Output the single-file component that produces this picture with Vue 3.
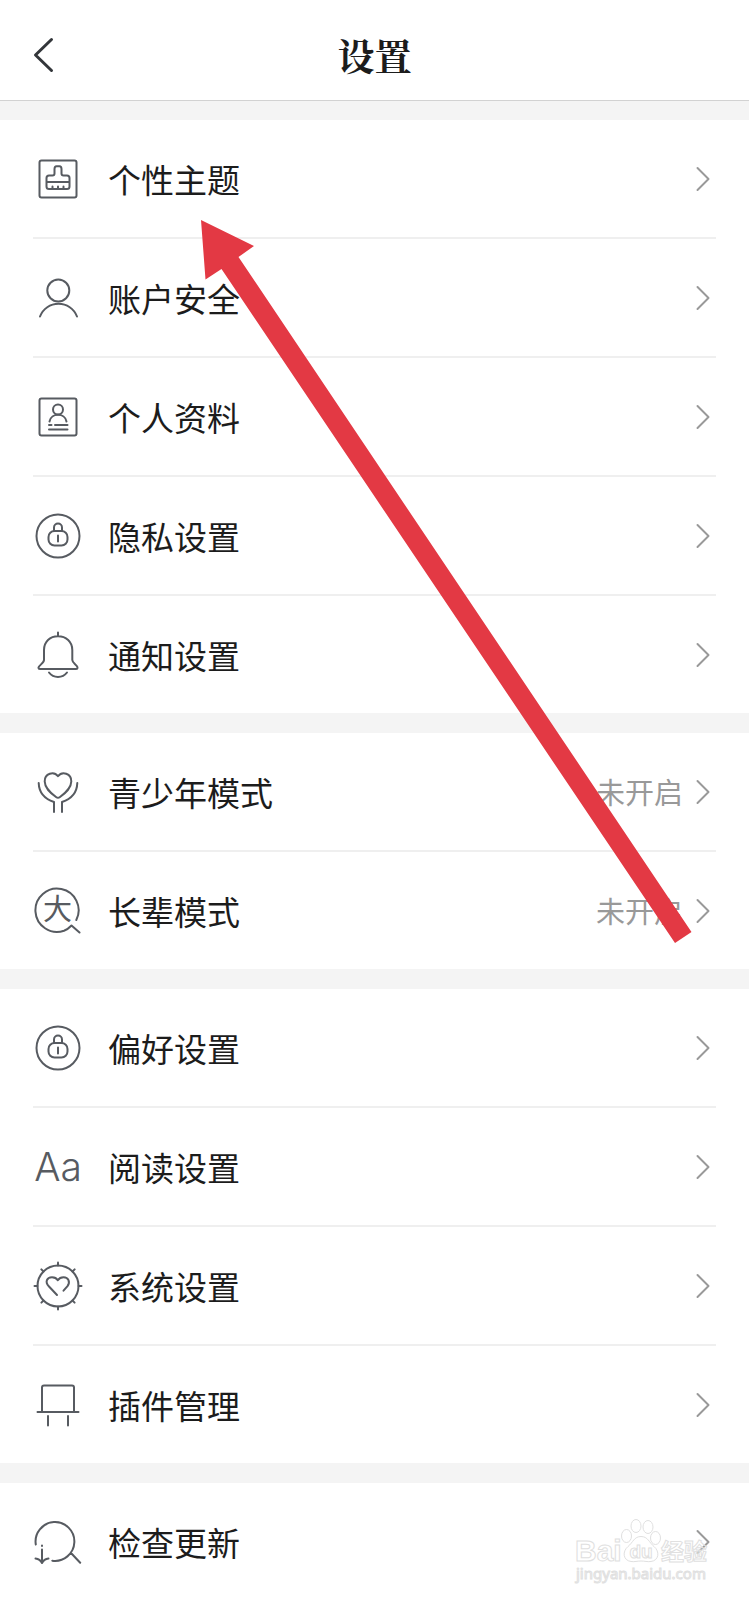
<script setup>
const groups = [
  [
    { icon: 'theme', label: '个性主题' },
    { icon: 'account', label: '账户安全' },
    { icon: 'profile', label: '个人资料' },
    { icon: 'lock', label: '隐私设置' },
    { icon: 'bell', label: '通知设置' },
  ],
  [
    { icon: 'youth', label: '青少年模式', value: '未开启' },
    { icon: 'elder', label: '长辈模式', value: '未开启' },
  ],
  [
    { icon: 'lock', label: '偏好设置' },
    { icon: 'reading', label: '阅读设置' },
    { icon: 'system', label: '系统设置' },
    { icon: 'plugin', label: '插件管理' },
  ],
  [{ icon: 'update', label: '检查更新' }],
]
const angles = [0, 45, 90, 135, 180, 225, 270, 315]
</script>

<template>
  <div class="page">
    <header class="header">
      <button class="back" type="button" aria-label="返回">
        <svg width="24" height="36" viewBox="0 0 24 36"><path d="M20.500 2.500L4.500 18l16 15.500" /></svg>
      </button>
      <h1 class="title">设置</h1>
    </header>

    <main class="groups">
      <ul v-for="(group, g) in groups" :key="g" class="group">
        <li v-for="item in group" :key="item.label" class="item">
          <button class="row" type="button">
            <svg class="icon" viewBox="-1 -1 50 50" aria-hidden="true">
              <g v-if="item.icon === 'theme'">
                <rect x="5.500" y="5.500" width="37" height="37" rx="2" />
                <path d="M15 34q-2.500 0-2.500-2.500V23q0-2.500 2.500-2.500h3.500q2 0 2-2V14q0-2.800 2-2.800h3q2 0 2 2.800v4.500q0 2 2 2H33q2.500 0 2.500 2.500v8.500q0 2.500-2.500 2.500zM12.500 27h23M18.500 31.500V34M24 31.500V34M29.500 31.500V34" />
              </g>
              <g v-else-if="item.icon === 'account'">
                <circle cx="24.300" cy="16.500" r="11" />
                <path d="M6 42.500a19.800 19.800 0 0 1 37 0" />
              </g>
              <g v-else-if="item.icon === 'profile'">
                <rect x="5.500" y="5.500" width="37" height="37" rx="2" />
                <circle cx="24" cy="16.500" r="5" />
                <path d="M15.500 28.500C17 19.500 31 19.500 32.500 28.500M15 32h2.500M21 32h12.500M15 36.500h18.500" />
              </g>
              <g v-else-if="item.icon === 'lock'">
                <circle cx="24" cy="24" r="21.500" />
                <rect x="14.500" y="19" width="19" height="14.500" rx="6" />
                <path d="M20 19v-3.500a4 4 0 0 1 8 0V19M24 23.500v6" />
              </g>
              <g v-else-if="item.icon === 'bell'">
                <path d="M24 1.500V5M10 29V19C10 10.500 16 5.200 24 5.200S38.300 10.500 38.300 19v10c0 3 5 5 5.200 7.500q0 1.500-1.500 1.500H6q-1.500 0-1.500-1.500C4.800 34.500 10 32 10 29zM15 41.500c4.500 6 13.500 6 18 0" />
              </g>
              <g v-else-if="item.icon === 'youth'">
                <path d="M24 8.200C20 3 10.500 5 10.700 13.500 10.800 20 16 24.500 22 29q2 1.500 4 0c6-4.500 11.200-9 11.300-15.500C37.500 5 28 3 24 8.200zM4.700 15C5 25 11 31 20 34v10M43.300 15C43 25 37 31 28 34v10" />
              </g>
              <g v-else-if="item.icon === 'elder'">
                <path d="M42.300 33A21.600 21.600 0 1 0 30 43.700Q34 42.200 37.500 38.500L45.500 45.500" />
                <text class="glyph-cjk" x="23.500" y="33" text-anchor="middle">大</text>
              </g>
              <g v-else-if="item.icon === 'reading'">
                <text class="glyph-latin" x="24" y="38" text-anchor="middle">Aa</text>
              </g>
              <g v-else-if="item.icon === 'system'">
                <circle cx="24" cy="24" r="20.500" />
                <path v-for="a in angles" :key="a" d="M24 .5v3" :transform="`rotate(${a} 24 24)`" />
                <path d="M23 33l-8-8.500C10.500 20 13 15.200 18 15.200q4 0 5.800 3 2-3 5.700-3c5 0 7 5 4 9l-4 4.500" />
              </g>
              <g v-else-if="item.icon === 'plugin'">
                <path d="M8 31V6.500q0-2 2-2h28q2 0 2 2V31M3.500 31h41M14 35v9.500M34 35v9.500" />
              </g>
              <g v-else-if="item.icon === 'update'">
                <path d="M1.800 26.500A19.400 19.400 0 1 1 18.300 42.700M37 35l9.200 9.800M8 27.500v.5M8 31.500v13M1.500 40.500Q6 41 8 45q2-4 6.500-4.500" />
              </g>
            </svg>
            <span class="label">{{ item.label }}</span>
            <span v-if="item.value" class="value">{{ item.value }}</span>
            <svg class="chevron" viewBox="0 0 26 26" aria-hidden="true"><path d="M7.500 2l11 11-11 11" /></svg>
          </button>
        </li>
      </ul>
    </main>

    <svg class="pointer" width="491" height="723" viewBox="0 0 491 723" aria-hidden="true">
      <path d="M0 0L53 26 37.500 37 490.500 712 474 723 20.500 49 4.500 59.500z" />
    </svg>

    <svg class="watermark" width="140" height="70" viewBox="0 0 140 70" role="img" aria-label="Baidu经验">
      <ellipse cx="53.500" cy="21" rx="5" ry="6.500" />
      <ellipse cx="63" cy="11" rx="5" ry="6.500" />
      <ellipse cx="75" cy="12" rx="5" ry="6.500" />
      <ellipse cx="82.500" cy="23" rx="5" ry="6.500" />
      <path d="M68 21.500c7 0 8 6 13 10 6 5 5 14-3 15-4 .5-6-.5-10-.5s-6 1-10 .5c-8-1-9-10-3-15 5-4 6-10 13-10z" />
      <text class="brand" x="2" y="46">Bai</text>
      <text class="brand-small" x="68" y="43" text-anchor="middle">du</text>
      <text class="brand-cjk" x="88" y="45">经验</text>
      <text class="site" x="3" y="64">jingyan.baidu.com</text>
    </svg>
  </div>
</template>

<style>
body {
  margin: 0;
  background: #fff;
}
</style>

<style scoped>
.page {
  position: relative;
  overflow: hidden;
  background: #f4f4f4;
  color: #1c1c1c;
  font-family: "Noto Sans CJK SC", sans-serif;
}
.header {
  display: grid;
  grid-template-columns: 1fr auto 1fr;
  align-items: center;
  box-sizing: border-box;
  height: 101px;
  padding: 9px 31px 0;
  background: #fff;
  border-bottom: 1px solid #d2d2d2;
}
button {
  border: 0;
  padding: 0;
  background: none;
  font: inherit;
  color: inherit;
  cursor: pointer;
}
.back {
  display: flex;
  justify-self: start;
}
.back path {
  fill: none;
  stroke: #33363a;
  stroke-width: 3;
  stroke-linecap: round;
  stroke-linejoin: round;
}
.title {
  margin: 0;
  font-family: "Noto Serif CJK SC", "Noto Sans CJK SC", serif;
  font-size: 37px;
  font-weight: 700;
  line-height: 48px;
}
.groups {
  display: flex;
  flex-direction: column;
  gap: 20px;
  padding-top: 19px;
}
.group {
  margin: 0;
  padding: 0 33px;
  list-style: none;
  background: #fff;
}
.item + .item {
  border-top: 2px solid #efefef;
}
.row {
  display: flex;
  align-items: center;
  width: 100%;
  height: 117px;
  text-align: left;
}
.icon {
  flex: none;
  width: 50px;
  height: 50px;
  margin-right: 25px;
  fill: none;
  stroke: #575b61;
  stroke-width: 2;
  stroke-linecap: round;
  stroke-linejoin: round;
}
.icon text {
  fill: #575b61;
  stroke: none;
}
.glyph-cjk {
  font-family: "Noto Sans CJK SC", sans-serif;
  font-size: 29px;
}
.glyph-latin {
  font-family: Inter, "Liberation Sans", sans-serif;
  font-size: 39px;
  font-weight: 300;
}
.label {
  flex: 1;
  font-size: 33px;
  line-height: 48px;
}
.value {
  margin-right: 7px;
  padding-bottom: 2px;
  font-size: 29px;
  line-height: 48px;
  color: #999;
}
.chevron {
  flex: none;
  width: 26px;
  height: 26px;
  fill: none;
  stroke: #999;
  stroke-width: 2;
  stroke-linecap: round;
  stroke-linejoin: round;
}
.pointer {
  position: absolute;
  top: 220px;
  left: 201px;
  fill: #e33944;
  pointer-events: none;
}
.watermark {
  position: absolute;
  right: 36px;
  bottom: 15px;
  fill: none;
  stroke: #e0e0e0;
  stroke-width: 1;
  pointer-events: none;
}
.watermark text {
  font-family: "Liberation Sans", "Noto Sans CJK SC", sans-serif;
  font-weight: 700;
}
.watermark .brand {
  font-size: 30px;
}
.watermark .brand-small {
  font-size: 19px;
}
.watermark .brand-cjk {
  font-size: 23px;
}
.watermark .site {
  font-family: "Noto Sans", sans-serif;
  font-size: 15px;
  font-weight: 400;
}
</style>
